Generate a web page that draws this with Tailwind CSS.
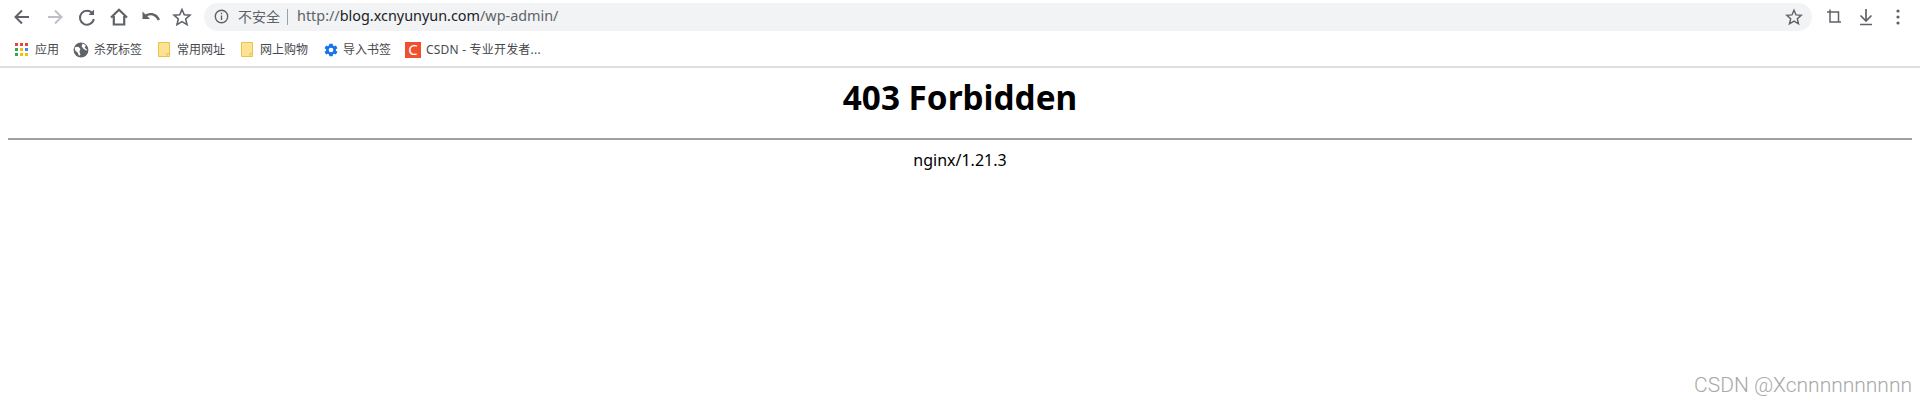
<!DOCTYPE html>
<html lang="zh-CN">
<head>
  <meta charset="UTF-8">
  <title>403 Forbidden</title>
  <script src="https://cdn.jsdelivr.net/npm/@tailwindcss/browser@4"></script>
</head>
<body class="relative h-[401px] overflow-hidden bg-white font-['Noto_Sans','Noto_Sans_CJK_SC',sans-serif] text-black">
  <!-- browser chrome -->
  <header class="h-[68px] border-b-2 border-[#dedfe1] bg-white">
    <div class="flex h-[33px] items-center pl-[12px] pr-[20px]">
      <!-- back -->
      <svg class="w-[20px] h-[20px] mr-[13px]" viewBox="0 0 20 20" fill="none" stroke="#5f6368" stroke-width="2"><path d="M17 10H4M10 3.500 3.500 10l6.500 6.500"/></svg>
      <!-- forward -->
      <svg class="w-[20px] h-[20px] mr-[12px]" viewBox="0 0 20 20" fill="none" stroke="#bdc1c6" stroke-width="2"><path d="M3 10h13M10 3.500l6.500 6.500-6.500 6.500"/></svg>
      <!-- reload -->
      <svg class="w-[20px] h-[20px] mr-[12px]" viewBox="0 0 20 20" fill="none" stroke="#5f6368" stroke-width="2"><path d="M15.500 6.500A7 7 0 1 0 16.800 12"/><path d="M17 2.500v5.500h-5.500z" fill="#5f6368" stroke="none"/></svg>
      <!-- home -->
      <svg class="w-[20px] h-[20px] mr-[12px]" viewBox="0 0 20 20" fill="none" stroke="#5f6368" stroke-width="2.200"><path d="M2 10.500 10 2.800l8 7.700M4.800 9v8.500h10.400V9"/></svg>
      <!-- undo -->
      <svg class="w-[20px] h-[20px] mr-[11px]" viewBox="0 0 20 20" fill="#5f6368"><path d="M1.500 4.500v7.500h7.500L6.300 9.300C9.300 7.400 14 8.200 16.800 13.500l2.200-.9C16.300 6 9.800 4.500 4.600 7.600z"/></svg>
      <!-- star -->
      <svg class="w-[20px] h-[20px] mr-[12px]" viewBox="0 0 20 20" fill="none" stroke="#5f6368" stroke-width="1.600"><path d="M10 2.500l2.300 5.200 5.700.5-4.300 3.800 1.300 5.600-5-3-5 3 1.300-5.600L2 8.200l5.700-.5z"/></svg>
      <!-- address bar -->
      <div class="flex h-[28px] flex-1 items-center rounded-full bg-[#f1f3f4] pl-[10px] pr-[9px]">
        <svg class="w-[15px] h-[15px] mr-[9px]" viewBox="0 0 15 15" fill="none" stroke="#5f6368" stroke-width="1.400"><circle cx="7.500" cy="7.500" r="6.200"/><path d="M7.500 6.500v4.500M7.500 3.800v1.500"/></svg>
        <span class="text-[14px] text-[#5f6368] leading-none">不安全</span>
        <span class="ml-[7px] mr-[9px] h-[16px] w-px bg-[#9aa0a6]"></span>
        <span class="text-[14.400px] leading-none text-[#5f6368]"><span>http://</span><span class="text-[#202124]">blog.xcnyunyun.com</span><span>/wp-admin/</span></span>
        <svg class="ml-auto w-[18px] h-[18px]" viewBox="0 0 20 20" fill="none" stroke="#5f6368" stroke-width="1.600"><path d="M10 2.500l2.300 5.200 5.700.5-4.300 3.800 1.300 5.600-5-3-5 3 1.300-5.600L2 8.200l5.700-.5z"/></svg>
      </div>
      <!-- crop -->
      <svg class="ml-[14px] w-[16px] h-[16px]" viewBox="0 0 16 16" fill="none" stroke="#5f6368" stroke-width="1.500"><path d="M1 3h11.500v10M4 0.500V13h11"/></svg>
      <!-- download -->
      <svg class="ml-[16px] w-[16px] h-[18px]" viewBox="0 0 16 18" fill="none" stroke="#5f6368" stroke-width="1.700"><path d="M8 1v11M2.500 7.500 8 13l5.500-5.500M2 16.500h12"/></svg>
      <!-- menu -->
      <svg class="ml-[22px] w-[4px] h-[16px]" viewBox="0 0 4 16" fill="#5f6368"><circle cx="2" cy="2" r="1.600"/><circle cx="2" cy="8" r="1.600"/><circle cx="2" cy="14" r="1.600"/></svg>
    </div>
    <!-- bookmarks -->
    <nav class="flex h-[33px] items-center pl-[15px] text-[12px] leading-none text-[#45484c]">
      <svg class="w-[13px] h-[13px] mr-[7px]" viewBox="0 0 13 13">
        <rect x="0" y="0" width="3" height="3" fill="#ea4335"/><rect x="5" y="0" width="3" height="3" fill="#ea4335"/><rect x="10" y="0" width="3" height="3" fill="#ea4335"/>
        <rect x="0" y="5" width="3" height="3" fill="#34a853"/><rect x="5" y="5" width="3" height="3" fill="#fbbc04"/><rect x="10" y="5" width="3" height="3" fill="#4285f4"/>
        <rect x="0" y="10" width="3" height="3" fill="#34a853"/><rect x="5" y="10" width="3" height="3" fill="#fbbc04"/><rect x="10" y="10" width="3" height="3" fill="#fbbc04"/>
      </svg>
      <span class="w-[24px] mr-[14px]">应用</span>
      <svg class="w-[16px] h-[16px] mr-[5px]" viewBox="0 0 15 15"><circle cx="7.500" cy="7.500" r="7" fill="#5f6368"/><path d="M1.500 5l3.500-.5 2 2-1 2.500 1 3-1.500 1-1-3L2 8zM9 1.500l3 1.500-1 2.500 2.500 2-1 .5-2.500-1.500L8 4z" fill="#fff"/></svg>
      <span class="w-[48px] mr-[16px]">杀死标签</span>
      <svg class="w-[12px] h-[15px] mr-[7px]" viewBox="0 0 12 15"><path d="M.5.500h11v14H.5z" fill="#fde293" stroke="#e8c34e"/><path d="M9 14.500v-3h2.500" fill="none" stroke="#e8c34e"/></svg>
      <span class="w-[48px] mr-[16px]">常用网址</span>
      <svg class="w-[12px] h-[15px] mr-[7px]" viewBox="0 0 12 15"><path d="M.5.500h11v14H.5z" fill="#fde293" stroke="#e8c34e"/><path d="M9 14.500v-3h2.500" fill="none" stroke="#e8c34e"/></svg>
      <span class="w-[48px] mr-[15px]">网上购物</span>
      <svg class="w-[16px] h-[16px] mr-[4px]" viewBox="0 0 24 24" fill="#1a73e8"><path fill-rule="evenodd" d="M19.400 13a7.500 7.500 0 0 0 0-2l2.300-1.800-2.300-3.900-2.700 1.100a7.500 7.500 0 0 0-1.700-1L14.500 2.500h-5L9 5.400a7.500 7.500 0 0 0-1.700 1L4.600 5.300 2.300 9.200 4.600 11a7.500 7.500 0 0 0 0 2l-2.300 1.800 2.300 3.900 2.700-1.100c.5.400 1.100.7 1.700 1l.5 2.900h5l.5-2.900c.6-.3 1.200-.6 1.700-1l2.700 1.100 2.300-3.900zM12 15.500a3.500 3.500 0 1 1 0-7 3.500 3.500 0 0 1 0 7z"/></svg>
      <span class="w-[48px] mr-[14px]">导入书签</span>
      <span class="flex w-[16px] h-[16px] mr-[5px] items-center justify-center bg-[#f1502f] text-[15px] leading-none text-white">C</span>
      <span class="tracking-[0.2px]">CSDN - 专业开发者...</span>
    </nav>
  </header>

  <!-- page -->
  <main class="pt-[7px] px-[8px]">
    <h1 class="text-center text-[33.300px] font-bold leading-[44px]">403 Forbidden</h1>
    <hr class="mt-[19px] h-[2px] border-0 bg-[#a0a0a0]">
    <p class="mt-[9px] text-center text-[16px] leading-[22px]">nginx/1.21.3</p>
  </main>

  <!-- watermark -->
  <div class="absolute right-[8px] bottom-[5px] font-['Roboto',sans-serif] text-[21px] font-light leading-none text-[#a8a8a8]">CSDN @Xcnnnnnnnnnn</div>
</body>
</html>
